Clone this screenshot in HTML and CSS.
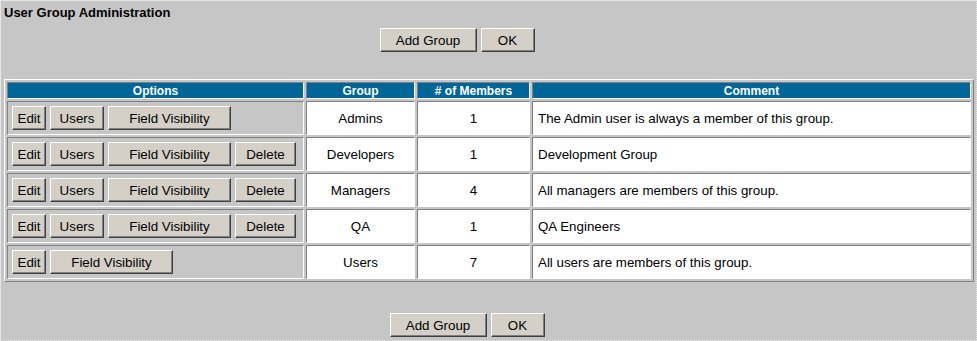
FILE: index.html
```html
<!DOCTYPE html>
<html>
<head>
<meta charset="utf-8">
<title>User Group Administration</title>
<link rel="stylesheet" href="styles.css">
</head>
<body>
<div class="page">
  <div class="title">User Group Administration</div>
  <div class="actions actions-top">
    <button class="btn btn-add">Add Group</button>
    <button class="btn btn-ok">OK</button>
  </div>
  <table class="groups">
    <colgroup>
      <col class="c-opt"><col class="c-grp"><col class="c-mem"><col class="c-com">
    </colgroup>
    <thead>
      <tr><th>Options</th><th>Group</th><th># of Members</th><th>Comment</th></tr>
    </thead>
    <tbody>
      <tr>
        <td class="opts"><div class="btns"><button class="btn b-edit">Edit</button><button class="btn b-users">Users</button><button class="btn b-fv">Field Visibility</button></div></td>
        <td class="ctr">Admins</td><td class="ctr">1</td><td class="com">The Admin user is always a member of this group.</td>
      </tr>
      <tr>
        <td class="opts"><div class="btns"><button class="btn b-edit">Edit</button><button class="btn b-users">Users</button><button class="btn b-fv">Field Visibility</button><button class="btn b-del">Delete</button></div></td>
        <td class="ctr">Developers</td><td class="ctr">1</td><td class="com">Development Group</td>
      </tr>
      <tr>
        <td class="opts"><div class="btns"><button class="btn b-edit">Edit</button><button class="btn b-users">Users</button><button class="btn b-fv">Field Visibility</button><button class="btn b-del">Delete</button></div></td>
        <td class="ctr">Managers</td><td class="ctr">4</td><td class="com">All managers are members of this group.</td>
      </tr>
      <tr>
        <td class="opts"><div class="btns"><button class="btn b-edit">Edit</button><button class="btn b-users">Users</button><button class="btn b-fv">Field Visibility</button><button class="btn b-del">Delete</button></div></td>
        <td class="ctr">QA</td><td class="ctr">1</td><td class="com">QA Engineers</td>
      </tr>
      <tr>
        <td class="opts"><div class="btns"><button class="btn b-edit">Edit</button><button class="btn b-fv">Field Visibility</button></div></td>
        <td class="ctr">Users</td><td class="ctr">7</td><td class="com">All users are members of this group.</td>
      </tr>
    </tbody>
  </table>
  <div class="actions actions-bottom">
    <button class="btn btn-add">Add Group</button>
    <button class="btn btn-ok">OK</button>
  </div>
</div>
</body>
</html>
```

FILE: styles.css
```css
html, body {
  margin: 0;
  padding: 0;
  background: #c6c6c6;
}
body {
  font-family: "Liberation Sans", Arial, sans-serif;
  font-size: 13.33px;
  color: #000;
}
.page {
  box-sizing: border-box;
  width: 977px;
  height: 341px;
  padding: 3px;
  border-top: 1px solid #e6e6e6;
  border-left: 1px solid #e6e6e6;
  border-right: 1px dotted #e6e6e6;
  border-bottom: 1px dotted #e6e6e6;
  overflow: hidden;
}
.title {
  font-weight: bold;
  font-size: 13px;
  line-height: 15px;
  padding-top: 1px;
  padding-left: 0;
}
.actions {
  display: flex;
  justify-content: center;
  gap: 4px;
}
.actions-top {
  margin-top: 8px;
  padding-right: 63px;
}
.actions-bottom {
  margin-top: 31px;
  padding-right: 43px;
}
.btn {
  box-sizing: border-box;
  height: 24px;
  margin: 0;
  padding: 0;
  font-family: "Liberation Sans", Arial, sans-serif;
  font-size: 13.33px;
  color: #000;
  background: #d4d0c8;
  border: 1px solid;
  border-color: #ffffff #404040 #404040 #ffffff;
  box-shadow: inset -1px -1px 0 #808080;
  border-radius: 0;
}
.btn-add { width: 97px; }
.btn-ok { width: 54px; }
.b-edit { width: 34px; }
.b-users { width: 54px; }
.b-fv { width: 123px; }
.b-del { width: 61px; }

.groups {
  margin-top: 27px;
  width: 970px;
  table-layout: fixed;
  border-collapse: separate;
  border-spacing: 2px;
  border: 1px solid;
  border-color: #ffffff #808080 #808080 #ffffff;
}
.c-opt { width: 297px; }
.c-grp { width: 109px; }
.c-mem { width: 113px; }
.c-com { width: auto; }
.groups th,
.groups td {
  border: 1px solid;
  border-color: #808080 #ffffff #ffffff #808080;
  padding: 0;
}
.groups th {
  height: 15px;
  background: #006699;
  color: #fff;
  font-weight: bold;
  font-size: 12px;
  line-height: 14px;
  text-align: center;
}
.groups td {
  height: 32px;
  background: #fff;
  vertical-align: middle;
}
.groups td.opts {
  background: #c6c6c6;
  padding-left: 4px;
}
.btns {
  display: flex;
  gap: 4px;
}
.groups td.ctr { text-align: center; }
.groups td.com { padding-left: 5px; }
```
